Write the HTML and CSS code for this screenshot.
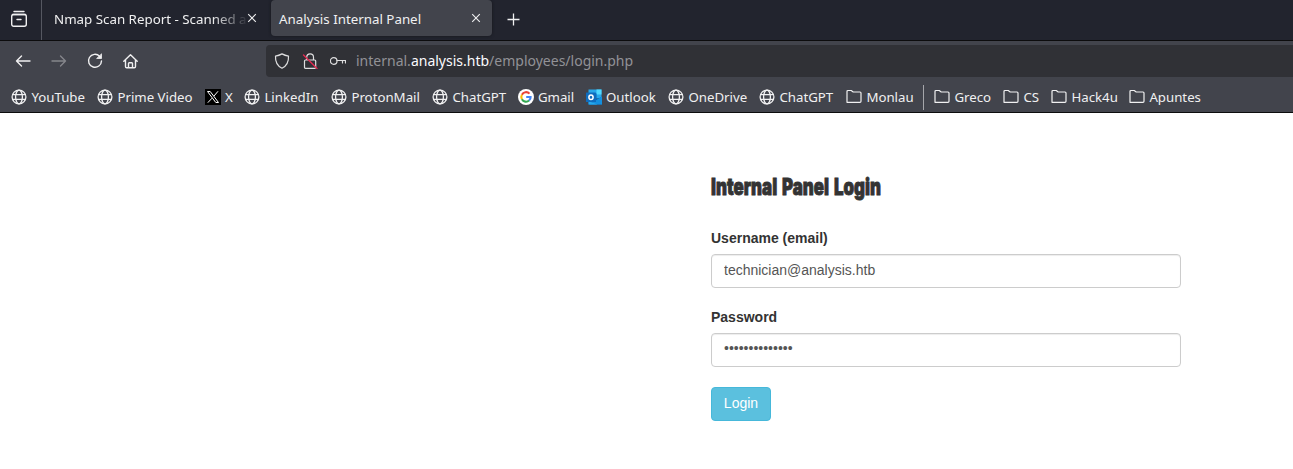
FILE: index.html
```html
<!DOCTYPE html>
<html lang="en">
<head>
<meta charset="utf-8">
<title>Analysis Internal Panel</title>
<link rel="stylesheet" href="styles.css">
</head>
<body>
<svg class="defs" width="0" height="0" aria-hidden="true">
  <symbol id="globe" viewBox="0 0 16 16"><g fill="none" stroke="currentColor" stroke-width="1.3"><circle cx="8" cy="8" r="6.9"/><ellipse cx="8" cy="8" rx="3.4" ry="6.9"/><path d="M1.2 5.6h13.6M1.2 10.4h13.6"/></g></symbol>
  <symbol id="folder" viewBox="0 0 16 16"><path d="M1 13.300V2.500q0-1 1-1h3.200l2 1.500h6.800q1 0 1 1v8.300q0 1-1 1z" fill="none" stroke="currentColor" stroke-width="1.2" stroke-linejoin="round"/></symbol>
  <symbol id="close" viewBox="0 0 10 10"><path d="M1.200 1.200l7.600 7.600M8.800 1.200l-7.600 7.600" stroke="currentColor" stroke-width="1.1"/></symbol>
</svg>
<header class="browser">
  <div class="tabbar">
    <div class="view"><svg width="18" height="18" viewBox="0 0 18 18" fill="none" stroke="currentColor" stroke-width="1.4" stroke-linecap="round"><path d="M4 1.500h10M2.500 4.500h13M7 9.500h4"/><rect x="1.700" y="4.500" width="14.600" height="11.800" rx="2"/></svg></div>
    <div class="tab"><span class="tab-title fade">Nmap Scan Report - Scanned a</span><svg class="close"><use href="#close"/></svg></div>
    <div class="tab active"><span class="tab-title">Analysis Internal Panel</span><svg class="close"><use href="#close"/></svg></div>
    <svg class="plus" width="13" height="13" viewBox="0 0 13 13"><path d="M6.500 .5v12M.5 6.500h12" stroke="currentColor" stroke-width="1.300"/></svg>
  </div>
  <div class="toolbar">
    <div class="nav">
      <svg viewBox="0 0 16 16"><path d="M15 8H1.500M6.500 3L1.500 8l5 5"/></svg>
      <svg class="off" viewBox="0 0 16 16"><path d="M1 8h13.500M9.500 3l5 5-5 5"/></svg>
      <svg viewBox="0 0 16 16"><path d="M12.600 3.200A6.500 6.500 0 1 0 14.500 8"/><path d="M14.500 1.200v4.300H10z" fill="currentColor" stroke-width=".8"/></svg>
      <svg viewBox="0 0 16 16"><path d="M.8 8.200L7.500 1.700 14.200 8.200M2.500 7v6.500q0 1.200 1.200 1.200h7.600q1.200 0 1.200-1.200V7M5.500 14.500v-4q0-.8.8-.8h2.400q.8 0 .8.8v4"/></svg>
    </div>
    <div class="urlbar">
      <svg viewBox="0 0 16 16"><path d="M8 .9Q11 2.500 14.500 3.200C14.800 9 12.500 13 8 15.200 3.500 13 1.200 9 1.500 3.200Q5 2.500 8 .9z"/></svg>
      <svg viewBox="0 0 16 16"><path d="M4.700 7V4.200a3.400 3.400 0 0 1 6.800 0V7M3.500 7h9.200q1 0 1 1v6.300q0 1-1 1H3.500q-1 0-1-1V8q0-1 1-1z"/><path class="strike" d="M1.500 2l13.500 13.500"/></svg>
      <svg viewBox="0 0 16 16"><circle cx="3.700" cy="8" r="3.300"/><path d="M7 7.500h8.500v2.500M12.500 7.500v2.500"/></svg>
      <div class="url">internal.<b>analysis.htb</b>/employees/login.php</div>
    </div>
  </div>
  <nav class="bookmarks">
    <a class="w-youtube"><svg><use href="#globe"/></svg>YouTube</a>
    <a class="w-prime"><svg><use href="#globe"/></svg>Prime Video</a>
    <a class="w-x"><svg viewBox="0 0 16 16"><path fill="#000" d="M0 0h16v16H0z"/><path d="M2.500 2.500h2.700l8.300 11h-2.700zM13 2.300L9 7M7 9.200l-4.200 4.500" fill="none" stroke="#fff" stroke-width="1"/></svg>X</a>
    <a class="w-linkedin"><svg><use href="#globe"/></svg>LinkedIn</a>
    <a class="w-proton"><svg><use href="#globe"/></svg>ProtonMail</a>
    <a class="w-chat"><svg><use href="#globe"/></svg>ChatGPT</a>
    <a class="w-gmail"><svg viewBox="0 0 16 16"><circle cx="8" cy="8" r="8" fill="#fff"/><g fill="none" stroke-width="2.100"><path d="M11.500 4.600A4.700 4.700 0 0 0 3.900 5.700" stroke="#ea4335"/><path d="M3.900 5.700a4.700 4.700 0 0 0 0 4.600" stroke="#fbbc05"/><path d="M3.900 10.300a4.700 4.700 0 0 0 7.200 1.200" stroke="#34a853"/><path d="M11.100 11.500Q12.700 10.200 12.600 8H8.200" stroke="#4285f4"/></g></svg>Gmail</a>
    <a class="w-outlook"><svg viewBox="0 0 16 16"><path fill="#28a8ea" d="M2.500 .5H15.500v9h-13z"/><path fill="#50d9ff" d="M10.500 .5h5v5h-5z"/><path fill="#0364b8" d="M2.500 4.500h8V10l5.500-2v7.500H2.500z"/><path fill="#1490df" d="M16 7.500v8H3z"/><path fill="#28a8ea" d="M2.500 15.500V12l9 3.500z"/><rect y="3.500" width="10" height="9.500" rx=".6" fill="#0f6cbd"/><ellipse cx="5" cy="8.200" rx="2.100" ry="2.300" fill="none" stroke="#fff" stroke-width="1.500"/></svg>Outlook</a>
    <a class="w-onedrive"><svg><use href="#globe"/></svg>OneDrive</a>
    <a class="w-chat2"><svg><use href="#globe"/></svg>ChatGPT</a>
    <a class="w-monlau"><svg><use href="#folder"/></svg>Monlau</a>
    <i class="separator"></i>
    <a class="w-greco"><svg><use href="#folder"/></svg>Greco</a>
    <a class="w-cs"><svg><use href="#folder"/></svg>CS</a>
    <a class="w-hack"><svg><use href="#folder"/></svg>Hack4u</a>
    <a><svg><use href="#folder"/></svg>Apuntes</a>
  </nav>
</header>
<main>
  <form class="login">
    <h1><svg class="heading" width="180" height="30"><text x="0" y="22" textLength="170" lengthAdjust="spacingAndGlyphs">Internal Panel Login</text></svg></h1>
    <label for="user">Username (email)</label>
    <input id="user" type="text" value="technician@analysis.htb">
    <label for="pass">Password</label>
    <div class="input dots" id="pass">••••••••••••••</div>
    <button type="button">Login</button>
  </form>
</main>
</body>
</html>
```
FILE: styles.css
```css
* { box-sizing: border-box; }
body { margin: 0; height: 469px; overflow: hidden; background: #fff; }
.defs { position: absolute; }
.browser { height: 113px; background: #42444c; border-bottom: 1px solid #0c0c0d; color: #f0f0f1; font: 13.333px/18px "Noto Sans", sans-serif; }
.tabbar { height: 41px; display: flex; background: #22242e; border-bottom: 1px solid #0c0c0d; }
.view { width: 42px; padding: 10px 0 0 10px; border-right: 1px solid #555761; }
.tab { height: 36px; width: 221px; display: flex; align-items: center; padding: 2px 10px 0 8px; border-radius: 0 0 4px 4px; }
.tab:not(.active) { width: 229px; padding: 2px 14px 0 12px; }
.tab.active { background: #42444c; border-radius: 4px; box-shadow: 0 0 3px #15161c; }
.tab-title { flex: 1; white-space: nowrap; }
.fade { mask-image: linear-gradient(to right, #000 82%, transparent 101%); }
.close { width: 10px; height: 10px; margin: 0 1px 2px 0; flex: none; }
.plus { margin: 13px 0 0 15px; }
.toolbar { height: 40px; display: flex; align-items: center; }
.nav { width: 266px; display: flex; gap: 20px; padding-left: 15px; }
.nav svg, .urlbar svg { width: 16px; height: 16px; fill: none; stroke: currentColor; stroke-width: 1.4; stroke-linejoin: round; stroke-linecap: round; flex: none; }
.nav .off { color: #85868b; }
.urlbar { flex: 1; height: 32px; display: flex; align-items: center; gap: 12px; padding-left: 8px; background: #303136; border-radius: 4px 0 0 4px; }
.urlbar svg { stroke-width: 1.2; color: #dededf; }
.urlbar .strike { stroke: #e22850; stroke-width: 1.4; }
.url { margin-left: -2px; font-size: 14px; color: #929296; white-space: nowrap; }
.url b { color: #fbfbfe; font-weight: 400; }
.bookmarks { height: 32px; display: flex; align-items: center; padding-left: 11.4px; font-size: 13.25px; white-space: nowrap; }
.bookmarks a { display: flex; align-items: center; gap: 4px; flex: none; }
.bookmarks svg { width: 16px; height: 16px; flex: none; }
.w-youtube { width: 86px; }
.w-prime { width: 107.5px; }
.w-x { width: 39.5px; }
.w-linkedin { width: 87px; }
.w-proton { width: 101px; }
.w-chat { width: 85.5px; }
.w-gmail { width: 68px; }
.w-outlook { width: 82.5px; }
.w-onedrive { width: 91px; }
.w-chat2 { width: 87px; }
.w-monlau { width: 76.6px; }
.separator { width: 1px; height: 25px; margin-right: 10.4px; background: #a5a6aa; }
.w-greco { width: 69px; }
.w-cs { width: 48px; }
.w-hack { width: 78px; }
.login { width: 470px; margin-left: 711px; padding-top: 60px; display: flex; flex-direction: column; font: 14px/20px "Liberation Sans", Arial, sans-serif; color: #333; }
h1 { margin: 0 0 25px; height: 30px; }
.heading { display: block; overflow: visible; fill: #333; stroke: #333; stroke-width: .9px; font: 900 23px "Inter", sans-serif; word-spacing: 2px; }
label { font-weight: 700; margin-bottom: 6px; }
input, .input { height: 34px; width: 100%; padding: 5px 12px 7px; margin: 0 0 19px; border: 1px solid #ccc; border-radius: 4px; background: #fff; color: #555; font: inherit; box-shadow: inset 0 1px 1px rgba(0,0,0,.075); }
.dots { margin-bottom: 20px; line-height: 19px; }
button { width: 60px; height: 34px; padding: 0 0 2px; border: 1px solid #46b8da; border-radius: 4px; background: #5bc0de; color: #fff; font: inherit; }
```
